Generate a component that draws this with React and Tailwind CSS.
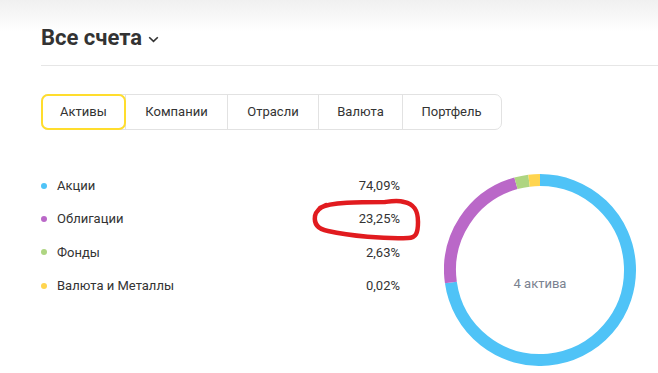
import React from "react";

const tabs = ["Активы", "Компании", "Отрасли", "Валюта", "Портфель"];
const tabWidths = [84, 102, 91, 84, 100];

const rows = [
  { name: "Акции", value: "74,09%", color: "bg-[#4fc3f7]" },
  { name: "Облигации", value: "23,25%", color: "bg-[#ba68c8]" },
  { name: "Фонды", value: "2,63%", color: "bg-[#aed581]" },
  { name: "Валюта и Металлы", value: "0,02%", color: "bg-[#ffd54f]" },
];

const segs = [
  { from: 0, to: 262, color: "#4fc3f7" },
  { from: 262, to: 344.5, color: "#ba68c8" },
  { from: 344.5, to: 353, color: "#aed581" },
  { from: 353, to: 360, color: "#ffd54f" },
];

function arc(cx, cy, r, a0, a1) {
  const p = (a) => {
    const rad = ((a - 90) * Math.PI) / 180;
    return [cx + r * Math.cos(rad), cy + r * Math.sin(rad)];
  };
  const [x0, y0] = p(a0);
  const [x1, y1] = p(a1);
  const large = a1 - a0 > 180 ? 1 : 0;
  return `M ${x0} ${y0} A ${r} ${r} 0 ${large} 1 ${x1} ${y1}`;
}

function Donut() {
  return (
    <div className="relative w-[192px] h-[192px] mt-[5px]">
      <svg width="192" height="192" viewBox="0 0 192 192">
        {segs.map((s, i) => (
          <path
            key={i}
            d={arc(96, 96, 90, s.from, s.to)}
            fill="none"
            stroke={s.color}
            strokeWidth="12"
          />
        ))}
      </svg>
      <div className="absolute left-0 right-0 top-[102px] text-center text-[13px] leading-[16px] text-[#7a8290]">
        4 актива
      </div>
    </div>
  );
}

export default function App() {
  return (
    <div
      className="relative w-[658px] h-[373px] overflow-hidden bg-[linear-gradient(to_bottom,#f0f0f0_0px,#ffffff_32px)] text-[#333333]"
      style={{ fontFamily: "Roboto, 'Noto Sans', sans-serif" }}
    >
      <div className="pl-[41px]">
        <div className="pt-[24px] flex items-center h-[52px]">
          <div className="flex items-center self-start">
            <span className="text-[22px] leading-[28px] font-bold text-[#333333]">
              Все счета
            </span>
            <svg
              width="11"
              height="7"
              viewBox="0 0 11 7"
              className="ml-[6px] mt-[3px]"
            >
              <path
                d="M1.2 1.2 L5.5 5.4 L9.8 1.2"
                fill="none"
                stroke="#333"
                strokeWidth="1.6"
              />
            </svg>
          </div>
        </div>
        <div className="mt-[13px] h-px bg-[#e6e6e6]" />
        <div className="mt-[28px] flex h-[36px] w-[461px] rounded-[7px] border border-[#e2e2e2] relative">
          {tabs.map((t, i) => (
            <div
              key={t}
              className={
                i === 0
                  ? "relative -m-px flex items-center justify-center border-2 border-[#ffdd2d] rounded-[7px] text-[13px] h-[36px]"
                  : "flex items-center justify-center text-[13px] border-l border-[#e2e2e2] first:border-l-0"
              }
              style={{ width: i === 0 ? tabWidths[i] + 1 : tabWidths[i] - (i === 4 ? 2 : 0) }}
            >
              {t}
            </div>
          ))}
        </div>
        <div className="mt-[39px] flex items-start">
          <div className="w-[359px] flex flex-col">
            {rows.map((r) => (
              <div
                key={r.name}
                className="relative h-[33.4px] flex items-center text-[13px]"
              >
                <span className={`w-[6px] h-[6px] rounded-full ${r.color}`} />
                <span className="ml-[10px] flex-1">{r.name}</span>
                <span>{r.value}</span>
              </div>
            ))}
          </div>
          <div className="ml-[44px]">
            <Donut />
          </div>
        </div>
      </div>
      <svg
        className="absolute left-[300px] top-[190px] pointer-events-none"
        width="130"
        height="60"
        viewBox="0 0 130 60"
      >
        <path
          d="M 20 18 C 30 12, 60 12, 85 12 C 92 11, 98 10, 104 12 C 114 14, 118 20, 118 32 C 118 43, 116 48, 108 48 C 85 49, 50 46, 28 41 C 17 39, 14 33, 15 26 C 16 21, 19 18, 26 15"
          fill="none"
          stroke="#e11b1f"
          strokeWidth="4.5"
          strokeLinecap="round"
          strokeLinejoin="round"
        />
      </svg>
    </div>
  );
}
